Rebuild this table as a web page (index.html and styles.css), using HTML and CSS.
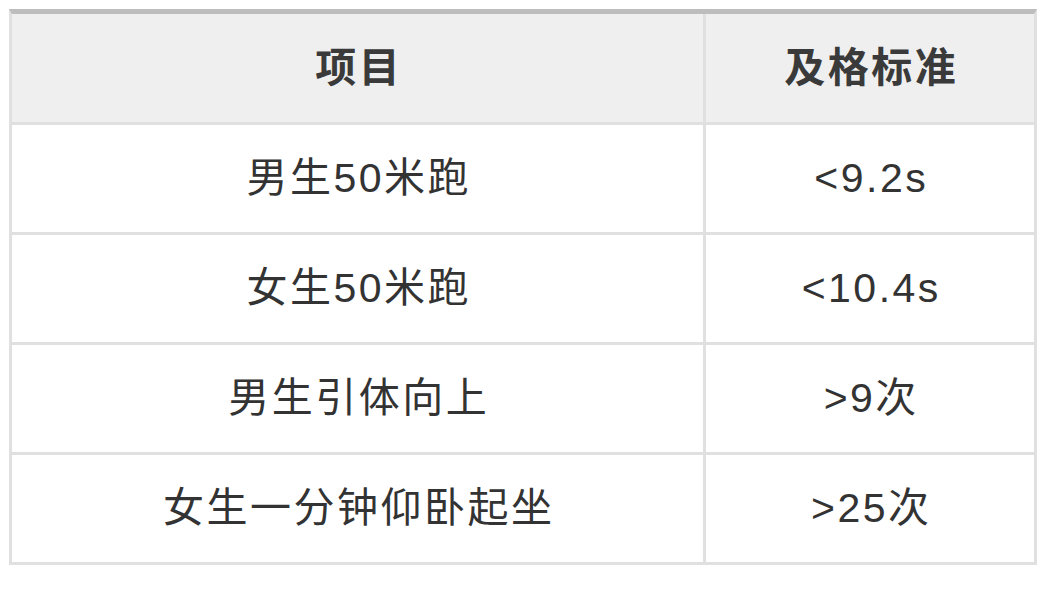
FILE: index.html
```html
<!DOCTYPE html>
<html lang="zh">
<head>
<meta charset="utf-8">
<title>及格标准</title>
<link rel="stylesheet" href="styles.css">
</head>
<body>
<div class="table">
  <div class="cell head">项目</div>
  <div class="cell head">及格标准</div>
  <div class="cell">男生50米跑</div>
  <div class="cell">&lt;9.2s</div>
  <div class="cell">女生50米跑</div>
  <div class="cell">&lt;10.4s</div>
  <div class="cell">男生引体向上</div>
  <div class="cell">&gt;9次</div>
  <div class="cell">女生一分钟仰卧起坐</div>
  <div class="cell">&gt;25次</div>
</div>
</body>
</html>
```
FILE: styles.css
```css
html, body {
  margin: 0;
  padding: 0;
  background: #ffffff;
}
body {
  font-family: "Liberation Sans", "Noto Sans CJK SC", sans-serif;
  color: #333333;
}
.table {
  margin: 9px 0 0 9px;
  width: 1028px;
  box-sizing: border-box;
  border-top: 5px solid #bdbdbd;
  border-left: 3px solid #e0e0e0;
  border-right: 3px solid #e0e0e0;
  border-bottom: 3px solid #e0e0e0;
  background: #e0e0e0;
  display: grid;
  grid-template-columns: 691px 1fr;
  grid-template-rows: 108px repeat(4, 107px);
  gap: 3px;
}
.cell {
  background: #ffffff;
  display: flex;
  align-items: center;
  justify-content: center;
  font-size: 41px;
  line-height: 1;
  letter-spacing: 2.5px;
  padding-left: 2.5px;
  color: #333333;
}
.cell.head {
  background: #efefef;
  font-weight: 700;
  color: #3a3a3a;
}
```
